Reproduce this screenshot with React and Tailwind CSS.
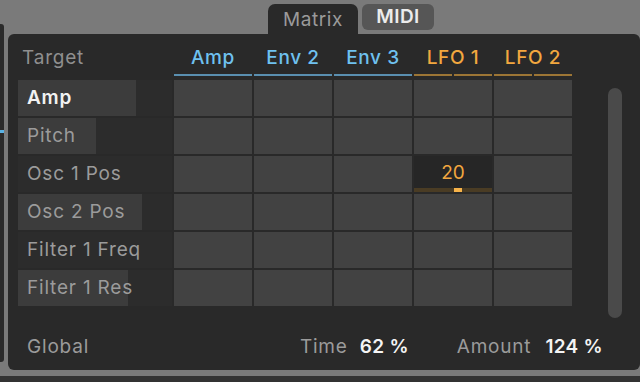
const font = { fontFamily: "Inter, 'Noto Sans', sans-serif" };

const columns = [
  { name: "Amp", color: "blue", split: false },
  { name: "Env 2", color: "blue", split: false },
  { name: "Env 3", color: "blue", split: false },
  { name: "LFO 1", color: "orange", split: true },
  { name: "LFO 2", color: "orange", split: true },
];

const targets = [
  { name: "Amp", bar: 118, active: true },
  { name: "Pitch", bar: 78 },
  { name: "Osc 1 Pos", bar: 0 },
  { name: "Osc 2 Pos", bar: 124 },
  { name: "Filter 1 Freq", bar: 0 },
  { name: "Filter 1 Res", bar: 110 },
];

const HeaderCell = ({ col }) => {
  const blue = col.color === "blue";
  return (
    <div className="flex flex-col items-stretch justify-end h-[42px]">
      <div
        className={`text-center text-[19px] tracking-[0.6px] leading-[24px] mb-[4px] font-medium ${
          blue ? "text-[#6fc1f0]" : "text-[#f2a73f]"
        }`}
      >
        {col.name}
      </div>
      {col.split ? (
        <div className="flex gap-[2px] h-[2px]">
          <div className="flex-1 bg-[#9c7535]" />
          <div className="flex-1 bg-[#9c7535]" />
        </div>
      ) : (
        <div className="h-[2px] bg-[#5a8fb0]" />
      )}
    </div>
  );
};

const TargetRow = ({ target, rowIndex }) => (
  <>
    <div className="relative h-[36px] bg-[#2c2c2c] flex items-center">
      {target.bar > 0 && (
        <div className="absolute left-0 top-0 h-full bg-[#3c3c3c]" style={{ width: target.bar }} />
      )}
      <span
        className={`relative pl-[9px] text-[19px] tracking-[0.8px] leading-[24px] ${
          target.active ? "text-[#f2f2f2] font-semibold tracking-[0.3px]" : "text-[#9b9b9b]"
        }`}
      >
        {target.name}
      </span>
    </div>
    {columns.map((col, i) =>
      rowIndex === 2 && i === 3 ? (
        <div key={col.name} className="h-[36px] bg-[#262626] flex flex-col">
          <div className="flex-1 flex items-center justify-center text-[19px] leading-[24px] text-[#f2a73f] pt-[2px]">
            20
          </div>
          <div className="flex h-[4px] bg-[#4a3c24]">
            <div className="w-[40px]" />
            <div className="w-[8px] bg-[#f7b34a]" />
          </div>
        </div>
      ) : (
        <div key={col.name} className="h-[36px] bg-[#424242]" />
      )
    )}
  </>
);

export default function App() {
  return (
    <div className="w-[640px] h-[382px] bg-[#7a7a7a] flex flex-col overflow-hidden" style={font}>
      <div className="flex flex-1">
        <div className="w-[4px] mt-[24px] mb-[8px] bg-[#2a2a2a] rounded-tr-[3px] rounded-br-[3px] flex flex-col">
          <div className="mt-[106px] h-[3px] bg-[#5ab2e4]" />
        </div>
        <div className="ml-[4px] flex-1 flex flex-col">
          <div className="h-[34px] pt-[4px] flex items-start">
            <div className="ml-[260px] w-[90px] h-[30px] bg-[#292929] rounded-t-[7px] flex items-center justify-center text-[19px] tracking-[0.6px] text-[#9a9a9a] pt-[2px]">
              Matrix
            </div>
            <div className="ml-[4px] w-[72px] h-[26px] bg-[#565656] rounded-[6px] flex items-center justify-center text-[19px] tracking-[0.4px] text-[#ececec] font-semibold">
              MIDI
            </div>
          </div>
          <div className="h-[336px] bg-[#292929] rounded-[6px] flex flex-col pl-[10px] pr-[18px]">
            <div className="flex h-[272px]">
              <div>
                <div className="grid grid-cols-[154px_repeat(5,78px)] gap-x-[2px]">
                  <div className="flex items-end h-[42px]">
                    <span className="pl-[4px] mb-[6px] text-[19px] tracking-[0.8px] leading-[24px] text-[#8f8f8f]">Target</span>
                  </div>
                  {columns.map((col) => (
                    <HeaderCell key={col.name} col={col} />
                  ))}
                </div>
                <div className="mt-[4px] grid grid-cols-[154px_repeat(5,78px)] gap-[2px]">
                  {targets.map((t, i) => (
                    <TargetRow key={t.name} target={t} rowIndex={i} />
                  ))}
                </div>
              </div>
              <div className="ml-[36px] mt-[54px] w-[14px] h-[230px] shrink-0 rounded-full bg-[#4a4a4a]" />
            </div>
            <div className="mt-[29px] h-[24px] flex items-center text-[19px] tracking-[0.8px] leading-[24px] pr-[19px]">
              <span className="pl-[9px] text-[#9b9b9b]">Global</span>
              <span className="ml-auto text-[#9b9b9b]">Time</span>
              <span className="ml-[12px] text-[#f4f4f4] font-semibold tracking-[0.3px]">62 %</span>
              <span className="ml-[48px] text-[#9b9b9b]">Amount</span>
              <span className="ml-[14px] text-[#f4f4f4] font-semibold tracking-[0.3px]">124 %</span>
            </div>
          </div>
        </div>
      </div>
      <div className="h-[6px] mt-[6px] bg-[#333333]" />
    </div>
  );
}
